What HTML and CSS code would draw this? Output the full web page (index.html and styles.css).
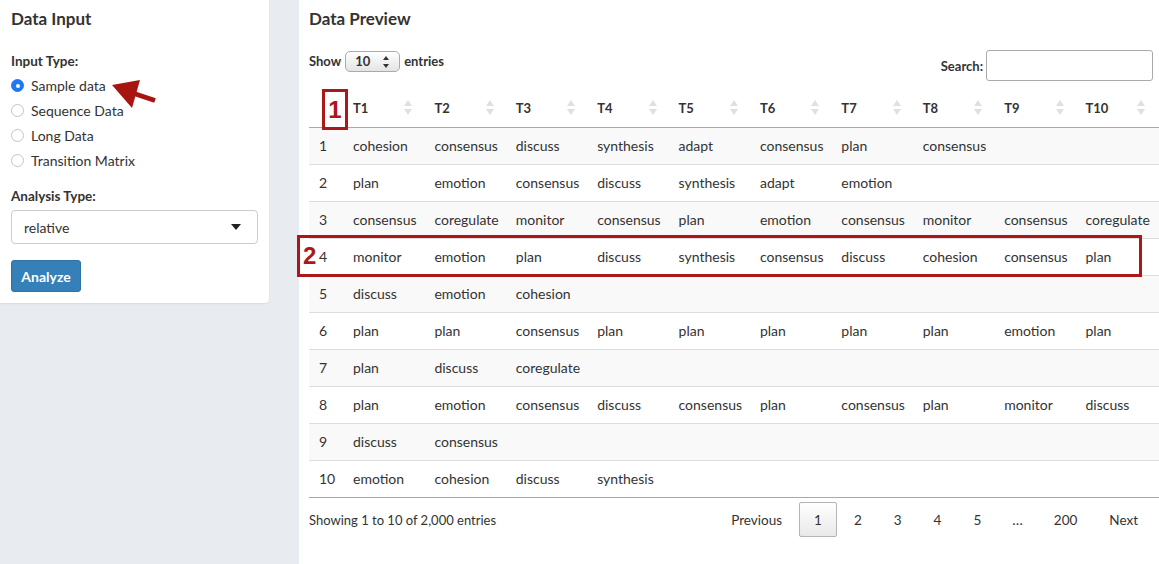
FILE: index.html
```html
<!DOCTYPE html>
<html>
<head>
<meta charset="utf-8">
<link rel="stylesheet" href="styles.css">
</head>
<body>
<aside class="sidebar">
  <h2 class="title">Data Input</h2>
  <div class="group-label">Input Type:</div>
  <div class="radios">
    <label class="radio"><span class="dot on"></span>Sample data</label>
    <label class="radio"><span class="dot"></span>Sequence Data</label>
    <label class="radio"><span class="dot"></span>Long Data</label>
    <label class="radio"><span class="dot"></span>Transition Matrix</label>
  </div>
  <div class="group-label second">Analysis Type:</div>
  <div class="select"><span>relative</span><span class="caret"></span></div>
  <button class="btn">Analyze</button>
  <svg class="arrow" width="64" height="44" viewBox="0 0 64 44">
    <line x1="34" y1="23.5" x2="55" y2="30.5" stroke="#a8140f" stroke-width="5" stroke-linecap="butt"/>
    <polygon points="12,15 40,10 32,38" fill="#a8140f"/>
  </svg>
</aside>
<main class="main">
  <h2 class="title">Data Preview</h2>
  <div class="controls">
    <div class="length">Show <span class="len-select">10<span class="spin"></span></span> entries</div>
    <div class="search">Search: <span class="search-input"></span></div>
  </div>
  <table class="grid">
    <colgroup><col class="c-idx"><col><col><col><col><col><col><col><col><col><col></colgroup>
    <thead>
      <tr><th class="idx"></th><th>T1</th><th>T2</th><th>T3</th><th>T4</th><th>T5</th><th>T6</th><th>T7</th><th>T8</th><th>T9</th><th>T10</th></tr>
    </thead>
    <tbody>
      <tr><td class="idx">1</td><td>cohesion</td><td>consensus</td><td>discuss</td><td>synthesis</td><td>adapt</td><td>consensus</td><td>plan</td><td>consensus</td><td></td><td></td></tr>
      <tr><td class="idx">2</td><td>plan</td><td>emotion</td><td>consensus</td><td>discuss</td><td>synthesis</td><td>adapt</td><td>emotion</td><td></td><td></td><td></td></tr>
      <tr><td class="idx">3</td><td>consensus</td><td>coregulate</td><td>monitor</td><td>consensus</td><td>plan</td><td>emotion</td><td>consensus</td><td>monitor</td><td>consensus</td><td>coregulate</td></tr>
      <tr><td class="idx">4</td><td>monitor</td><td>emotion</td><td>plan</td><td>discuss</td><td>synthesis</td><td>consensus</td><td>discuss</td><td>cohesion</td><td>consensus</td><td>plan</td></tr>
      <tr><td class="idx">5</td><td>discuss</td><td>emotion</td><td>cohesion</td><td></td><td></td><td></td><td></td><td></td><td></td><td></td></tr>
      <tr><td class="idx">6</td><td>plan</td><td>plan</td><td>consensus</td><td>plan</td><td>plan</td><td>plan</td><td>plan</td><td>plan</td><td>emotion</td><td>plan</td></tr>
      <tr><td class="idx">7</td><td>plan</td><td>discuss</td><td>coregulate</td><td></td><td></td><td></td><td></td><td></td><td></td><td></td></tr>
      <tr><td class="idx">8</td><td>plan</td><td>emotion</td><td>consensus</td><td>discuss</td><td>consensus</td><td>plan</td><td>consensus</td><td>plan</td><td>monitor</td><td>discuss</td></tr>
      <tr><td class="idx">9</td><td>discuss</td><td>consensus</td><td></td><td></td><td></td><td></td><td></td><td></td><td></td><td></td></tr>
      <tr><td class="idx">10</td><td>emotion</td><td>cohesion</td><td>discuss</td><td>synthesis</td><td></td><td></td><td></td><td></td><td></td><td></td></tr>
    </tbody>
  </table>
  <div class="footer">
    <div class="info">Showing 1 to 10 of 2,000 entries</div>
    <div class="pager">
      <span class="pg">Previous</span>
      <span class="pg current">1</span>
      <span class="pg">2</span>
      <span class="pg">3</span>
      <span class="pg">4</span>
      <span class="pg">5</span>
      <span class="ellipsis">…</span>
      <span class="pg">200</span>
      <span class="pg">Next</span>
    </div>
  </div>
  <div class="mark mark-1">1</div>
  <div class="mark mark-2"><span>2</span></div>
</main>
</body>
</html>
```
FILE: styles.css
```css
* { box-sizing: border-box; }
html, body { height: 100%; }
body {
  margin: 0;
  background: #e8ecf1;
  font-family: Lato, "Liberation Sans", sans-serif;
  font-size: 14px;
  color: #333;
  display: flex;
  gap: 30px;
  overflow: hidden;
}
.sidebar {
  position: relative;
  width: 269px;
  flex: none;
  align-self: flex-start;
  background: #fff;
  border-radius: 0 0 4px 0;
  box-shadow: 0 1px 2px rgba(0,0,0,0.08);
  padding: 9px 11px 11px;
  display: flex;
  flex-direction: column;
  align-items: flex-start;
}
.title {
  margin: 0;
  font-size: 17px;
  line-height: 20px;
  font-weight: 700;
  color: #333;
}
.group-label {
  margin-top: 22px;
  font-weight: 700;
  font-size: 13.5px;
  line-height: 20px;
}
.group-label.second { margin-top: 13px; }
.radios { margin-top: 2px; display: flex; flex-direction: column; }
.radio {
  height: 25px;
  display: flex;
  align-items: center;
  gap: 7px;
  font-size: 14px;
}
.dot {
  width: 13px;
  height: 13px;
  border-radius: 50%;
  border: 1px solid #c4c4c4;
  background: #fff;
  position: relative;
}
.dot.on { background: #1f78f0; border-color: #1f78f0; }
.dot.on::after {
  content: "";
  position: absolute;
  left: 3.5px; top: 3.5px;
  width: 4px; height: 4px;
  border-radius: 50%;
  background: #fff;
}
.select {
  margin-top: 4px;
  width: 247px;
  height: 34px;
  border: 1px solid #ccc;
  border-radius: 4px;
  display: flex;
  align-items: center;
  justify-content: space-between;
  padding: 0 16px 0 12px;
}
.caret {
  width: 0; height: 0;
  border-left: 5.5px solid transparent;
  border-right: 5.5px solid transparent;
  border-top: 6px solid #222;
}
.btn {
  margin-top: 16px;
  width: 70px;
  height: 32px;
  background: #3580b8;
  border: 1px solid #2f72a6;
  border-radius: 3px;
  color: #fff;
  font-family: inherit;
  font-size: 14px;
  font-weight: 700;
  padding: 0;
}
.arrow { position: absolute; left: 100px; top: 70px; }

.main {
  position: relative;
  flex: 1;
  background: #fff;
  padding: 9px 6px 0 10px;
  min-width: 0;
}
.controls {
  margin-top: 21px;
  display: flex;
  justify-content: space-between;
  align-items: flex-start;
  height: 31px;
}
.length {
  display: flex;
  align-items: center;
  gap: 4px;
  font-weight: 700;
  font-size: 13px;
  height: 22px;
}
.len-select {
  position: relative;
  width: 55px;
  height: 21px;
  border: 1px solid #aaa;
  border-radius: 5px;
  background: linear-gradient(#fff, #e4e4e4);
  padding-left: 9px;
  line-height: 19px;
  font-weight: 700;
}
.spin { position: absolute; right: 9px; top: 4px; width: 7px; height: 12px; }
.spin::before, .spin::after {
  content: ""; position: absolute; left: 0; width: 0; height: 0;
  border-left: 3.5px solid transparent; border-right: 3.5px solid transparent;
}
.spin::before { top: 0; border-bottom: 4px solid #333; }
.spin::after { bottom: 0; border-top: 4px solid #333; }
.search {
  display: flex;
  align-items: center;
  gap: 3px;
  font-weight: 700;
  font-size: 13px;
}
.search-input {
  width: 167px;
  height: 31px;
  border: 1px solid #aaa;
  border-radius: 3px;
}
.grid {
  margin-top: 7px;
  width: 850px;
  table-layout: fixed;
  border-collapse: separate;
  border-spacing: 0;
  font-size: 14px;
}
.c-idx { width: 36px; }
.grid th {
  position: relative;
  height: 39px;
  text-align: left;
  font-weight: 700;
  font-size: 13px;
  padding: 0 8px;
}
.grid th:not(.idx)::before, .grid th:not(.idx)::after {
  content: ""; position: absolute; right: 14px; width: 0; height: 0;
  border-left: 4px solid transparent; border-right: 4px solid transparent;
}
.grid th:not(.idx)::before { top: 12px; border-bottom: 6px solid #e0e0e0; }
.grid th:not(.idx)::after { top: 21px; border-top: 6px solid #e0e0e0; }
.grid td {
  height: 37px;
  padding: 0 8px 1px;
  white-space: nowrap;
  border-top: 1px solid #ddd;
}
.grid tbody tr:first-child td { border-top-color: #a9a9a9; }
.grid tbody tr:nth-child(odd) td { background: #f9f9f9; }
.grid tbody tr:last-child td { height: 38px; border-bottom: 1px solid #a9a9a9; }
.grid .idx { padding-left: 10px; padding-right: 0; }
.footer {
  margin-top: 4px;
  display: flex;
  justify-content: space-between;
  align-items: center;
}
.info { font-size: 13px; }
.pager { display: flex; align-items: center; }
.pg {
  height: 35px;
  padding: 0 14px;
  margin-left: 2px;
  border: 1px solid transparent;
  border-radius: 2px;
  display: flex;
  align-items: center;
  color: #333;
  font-size: 13.5px;
}
.pg.current {
  border-color: #b5b5b5;
  background: linear-gradient(#fff, #e9e9e9);
}
.ellipsis { padding: 0 14px; margin-left: 2px; }
.mark {
  position: absolute;
  color: #ad1717;
  font-weight: 700;
  font-family: "Liberation Sans", Arial, sans-serif;
  font-size: 24px;
  line-height: 1;
}
.mark-1 {
  left: 23px; top: 89px;
  width: 26px; height: 41px;
  border: 3px solid #ad1717;
  display: flex; align-items: center; justify-content: center;
}
.mark-2 {
  left: -2px; top: 235px;
  width: 845px; height: 42px;
  border: 3px solid #ad1717;
  display: flex; align-items: center;
  padding-left: 3px;
}
```
